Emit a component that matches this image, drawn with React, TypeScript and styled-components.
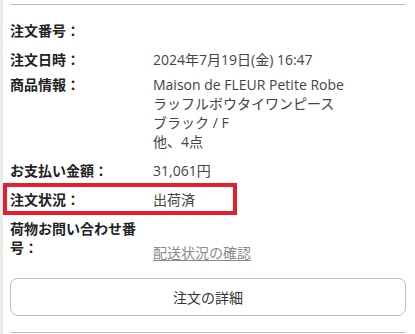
import React, { ReactElement } from "react";
import styled, { createGlobalStyle, css } from "styled-components";

const GlobalStyle = createGlobalStyle`
  html, body {
    margin: 0;
    padding: 0;
    background: #fff;
  }
  body {
    font-family: "Open Sans", "Noto Sans CJK JP", sans-serif;
    font-size: 14px;
    color: #333;
  }
`;

const Page = styled.div`
  width: 415px;
  height: 334px;
  box-sizing: border-box;
  border-left: 3px solid #ebebeb;
  padding: 4px 9px 0 7px;
  overflow: hidden;
`;

const Divider = styled.div`
  height: 1px;
  background: #bcbcbc;
`;

const List = styled.div`
  display: flex;
  flex-direction: column;
  padding-top: 16px;
`;

const Row = styled.div<{ $gap?: number; $highlight?: boolean }>`
  position: relative;
  display: flex;
  align-items: flex-start;
  line-height: 19px;
  margin-top: ${(p) => (p.$gap ?? 10)}px;
  &:first-child {
    margin-top: 0;
  }
  ${(p) =>
    p.$highlight &&
    css`
      &::after {
        content: "";
        position: absolute;
        left: -7px;
        top: -6.5px;
        width: 234px;
        height: 32px;
        box-sizing: border-box;
        border: 4px solid #e3202b;
        pointer-events: none;
      }
    `}
`;

const Label = styled.div`
  flex: 0 0 143px;
  box-sizing: border-box;
  padding-right: 12px;
  font-weight: bold;
  color: #222;
`;

const Value = styled.div<{ $offset?: number }>`
  flex: 1;
  color: #444;
  min-height: 19px;
  padding-top: ${(p) => p.$offset ?? 0}px;
`;

const Line = styled.div``;

const TrackLink = styled.a`
  color: #8a8a8a;
  text-decoration: underline;
  text-underline-offset: 2px;
`;

const DetailButton = styled.button`
  display: block;
  width: 100%;
  height: 38px;
  margin: 16px 0 16px;
  border: 1px solid #bcbcbc;
  border-radius: 8px;
  background: #fff;
  font-family: "Open Sans", "Noto Sans CJK JP", sans-serif;
  font-size: 14px;
  color: #333;
  cursor: pointer;
`;

export default (): ReactElement => {
  return (
    <>
      <GlobalStyle />
      <Page>
        <Divider />
        <List>
          <Row>
            <Label>注文番号：</Label>
            <Value />
          </Row>
          <Row>
            <Label>注文日時：</Label>
            <Value>2024年7月19日(金) 16:47</Value>
          </Row>
          <Row $gap={5.5}>
            <Label>商品情報：</Label>
            <Value>
              <Line>Maison de FLEUR Petite Robe</Line>
              <Line>ラッフルボウタイワンピース</Line>
              <Line>ブラック / F</Line>
              <Line>他、4点</Line>
            </Value>
          </Row>
          <Row>
            <Label>お支払い金額：</Label>
            <Value>31,061円</Value>
          </Row>
          <Row $highlight>
            <Label>注文状況：</Label>
            <Value>出荷済</Value>
          </Row>
          <Row>
            <Label>荷物お問い合わせ番号：</Label>
            <Value $offset={24}>
              <TrackLink href="#">配送状況の確認</TrackLink>
            </Value>
          </Row>
        </List>
        <DetailButton>注文の詳細</DetailButton>
        <Divider />
      </Page>
    </>
  );
};
